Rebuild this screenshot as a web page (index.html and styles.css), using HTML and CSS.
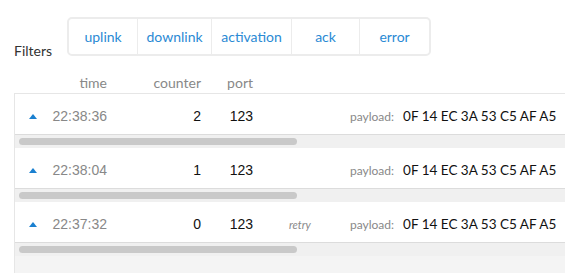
FILE: index.html
```html
<!DOCTYPE html>
<html lang="en">
<head>
    <meta charset="UTF-8">
    <meta name="viewport" content="width=device-width, initial-scale=1.0">
    <title>Frames</title>
    <link rel="stylesheet" href="styles.css">
</head>
<body>
    <div class="page">
        <div class="filters">
            <span class="filters-label">Filters</span>
            <div class="filter-group">
                <button class="filter">uplink</button>
                <button class="filter">downlink</button>
                <button class="filter">activation</button>
                <button class="filter">ack</button>
                <button class="filter">error</button>
            </div>
        </div>

        <div class="log-head">
            <span class="col-arrow"></span>
            <span class="col-time">time</span>
            <span class="col-counter">counter</span>
            <span class="col-port">port</span>
        </div>

        <div class="log">
            <div class="frame">
                <div class="frame-row">
                    <span class="col-arrow"><span class="up"></span></span>
                    <span class="col-time">22:38:36</span>
                    <span class="col-counter">2</span>
                    <span class="col-port">123</span>
                    <span class="col-flags"></span>
                    <span class="payload-label">payload:</span>
                    <span class="payload">0F 14 EC 3A 53 C5 AF A5</span>
                </div>
                <div class="hscroll"><div class="hscroll-thumb"></div></div>
            </div>
            <div class="frame">
                <div class="frame-row">
                    <span class="col-arrow"><span class="up"></span></span>
                    <span class="col-time">22:38:04</span>
                    <span class="col-counter">1</span>
                    <span class="col-port">123</span>
                    <span class="col-flags"></span>
                    <span class="payload-label">payload:</span>
                    <span class="payload">0F 14 EC 3A 53 C5 AF A5</span>
                </div>
                <div class="hscroll"><div class="hscroll-thumb"></div></div>
            </div>
            <div class="frame">
                <div class="frame-row">
                    <span class="col-arrow"><span class="up"></span></span>
                    <span class="col-time">22:37:32</span>
                    <span class="col-counter">0</span>
                    <span class="col-port">123</span>
                    <span class="col-flags">retry</span>
                    <span class="payload-label">payload:</span>
                    <span class="payload">0F 14 EC 3A 53 C5 AF A5</span>
                </div>
                <div class="hscroll"><div class="hscroll-thumb"></div></div>
            </div>
        </div>
    </div>
</body>
</html>
```

FILE: styles.css
```css
body {
    margin: 0;
    padding: 0;
    background-color: #fff;
    font-family: Lato, "Open Sans", sans-serif;
    overflow: hidden;
}

.page {
    display: flex;
    flex-direction: column;
    height: 100vh;
    box-sizing: border-box;
    padding: 17px 0 0 14px;
}

/* filter bar */
.filters {
    display: flex;
    align-items: flex-end;
    gap: 15px;
}

.filters-label {
    font-size: 14px;
    line-height: 16px;
    color: #333;
    margin-bottom: -3px;
}

.filter-group {
    display: grid;
    grid-template-columns: 68px 74px 80px 68px 70px;
    height: 39px;
    box-sizing: border-box;
    border: 2px solid #ececec;
    border-radius: 5px;
}

.filter {
    background: none;
    border: none;
    border-left: 1px solid #ececec;
    padding: 0;
    font-family: Lato, sans-serif;
    font-size: 14px;
    color: #2a8ad4;
    cursor: pointer;
}

.filter:first-child {
    border-left: none;
}

/* columns */
.log-head,
.frame-row {
    display: flex;
    align-items: center;
    white-space: nowrap;
}

.col-arrow {
    margin-left: 14px;
    width: 8px;
    flex-shrink: 0;
    display: flex;
    align-items: center;
}

.col-time {
    width: 70px;
    flex-shrink: 0;
    text-align: right;
}

.col-counter {
    width: 94px;
    flex-shrink: 0;
    text-align: right;
}

.col-port {
    width: 52px;
    flex-shrink: 0;
    text-align: right;
}

.log-head {
    margin-top: 17px;
    padding-left: 1px;
    font-size: 14px;
    line-height: 20px;
    color: #888;
}

/* frames */
.log {
    flex: 1;
    overflow: hidden;
    border-top: 1px solid #e6e6e6;
    border-left: 1px solid #e6e6e6;
    background-color: #f4f4f4;
}

.frame-row {
    height: 41px;
    box-sizing: border-box;
    padding-top: 4px;
    background-color: #fff;
    border-bottom: 1px solid #dcdcdc;
    font-family: "Liberation Sans", Arial, sans-serif;
    font-size: 14px;
    color: #111;
}

.frame-row .col-time {
    color: #888;
}

.up {
    width: 0;
    height: 0;
    border-left: 4px solid transparent;
    border-right: 4px solid transparent;
    border-bottom: 5px solid #1a80d0;
}

.col-flags {
    width: 61px;
    flex-shrink: 0;
    margin-left: 36px;
    font-family: Lato, sans-serif;
    font-style: italic;
    font-size: 11px;
    color: #888;
}

.payload-label {
    font-family: Lato, sans-serif;
    font-size: 12px;
    color: #888;
}

.payload {
    margin-left: 9px;
    font-family: Lato, sans-serif;
    font-size: 13.5px;
    color: #111;
}

/* row scrollbar */
.hscroll {
    height: 13px;
    padding: 3px 4px;
    box-sizing: border-box;
    background-color: #f0f0f0;
}

.hscroll-thumb {
    width: 278px;
    height: 7px;
    border-radius: 4px;
    background-color: #c9c9c9;
}
```
